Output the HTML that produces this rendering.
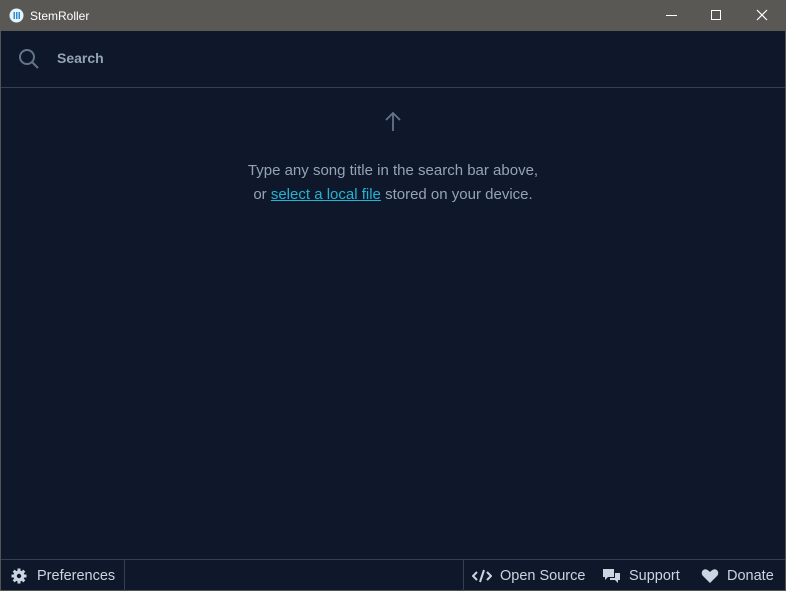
<!DOCTYPE html>
<html><head><style>
*{margin:0;padding:0;box-sizing:border-box}
body{width:786px;height:591px;overflow:hidden;background:#0f172a;font-family:"Liberation Sans",sans-serif;position:relative}
.tb{position:absolute;left:0;top:0;width:786px;height:31px;background:#595854;color:#fff;font-size:12px}
.frame{position:absolute;left:0;top:31px;width:786px;height:560px;border-left:1px solid #55554f;border-right:1px solid #55554f;border-bottom:1px solid #55554f}
.hline{position:absolute;left:1px;right:1px;height:1px;background:#334155}
.txt{position:absolute;left:0;width:786px;text-align:center;color:#94a3b8;font-size:15px}
.ft{position:absolute;top:560px;height:31px;color:#cbd5e1;font-size:14.5px;display:flex;align-items:center}
</style></head><body>
<div class="tb">
<svg style="position:absolute;left:9px;top:8px" width="15" height="15"><circle cx="7.5" cy="7.5" r="7" fill="#e8f4fb"/><rect x="4.5" y="4" width="1.5" height="7" fill="#2a8fd0"/><rect x="7" y="4" width="1.5" height="7" fill="#2a8fd0"/><rect x="9.5" y="4" width="1.5" height="7" fill="#2a8fd0"/></svg>
<span style="position:absolute;left:30px;top:9px">StemRoller</span>
<div style="position:absolute;left:666px;top:15px;width:11px;height:1px;background:#fff"></div>
<div style="position:absolute;left:711px;top:10px;width:10px;height:10px;border:1px solid #fff"></div>
<svg style="position:absolute;left:756px;top:9px" width="12" height="12"><path d="M1 1L11 11M11 1L1 11" stroke="#fff" stroke-width="1.2"/></svg>
</div>
<div class="frame"></div>
<svg style="position:absolute;left:18px;top:48px" width="22" height="22"><circle cx="9" cy="9" r="7" fill="none" stroke="#64748b" stroke-width="2"/><path d="M14 14L20 20" stroke="#64748b" stroke-width="2"/></svg>
<div style="position:absolute;left:57px;top:50px;color:#94a3b8;font-weight:bold;font-size:14px">Search</div>
<div class="hline" style="top:87px"></div>
<svg style="position:absolute;left:384px;top:111px" width="18" height="22"><path d="M9 20V2M2 9L9 2L16 9" fill="none" stroke="#64748b" stroke-width="1.8"/></svg>
<div class="txt" style="top:162px">Type any song title in the search bar above,</div>
<div class="txt" style="top:186px">or <span style="color:#22b5d3;text-decoration:underline">select a local file</span> stored on your device.</div>
<div class="hline" style="top:559px"></div>
<div style="position:absolute;left:124px;top:560px;width:1px;height:31px;background:#334155"></div>
<div style="position:absolute;left:463px;top:560px;width:1px;height:31px;background:#334155"></div>
<div class="ft" style="left:11px"><svg width="16" height="16" viewBox="0 0 16 16"><g fill="#cbd5e1"><circle cx="8" cy="8" r="5.5"/><rect x="6.5" y="0.5" width="3" height="15"/><rect x="0.5" y="6.5" width="15" height="3"/><rect x="6.5" y="0.5" width="3" height="15" transform="rotate(45 8 8)"/><rect x="6.5" y="0.5" width="3" height="15" transform="rotate(-45 8 8)"/></g><circle cx="8" cy="8" r="2.2" fill="#0f172a"/></svg><span style="margin-left:10px">Preferences</span></div>
<div class="ft" style="left:472px"><svg width="20" height="14"><path d="M5 3L1 7L5 11M15 3L19 7L15 11M12 1L8 13" fill="none" stroke="#cbd5e1" stroke-width="2"/></svg><span style="margin-left:8px">Open Source</span></div>
<div class="ft" style="left:602px"><svg width="20" height="16"><path d="M1 1H12V9H6L3 12V9H1Z" fill="#cbd5e1"/><path d="M13 5H18V12H16V15L13 12H8V10H13Z" fill="#cbd5e1"/></svg><span style="margin-left:7px">Support</span></div>
<div class="ft" style="left:701px"><svg width="18" height="16"><path d="M9 15L2 8C-1 5 2 0 5.5 1.5C7 2 8 3 9 4C10 3 11 2 12.5 1.5C16 0 19 5 16 8Z" fill="#cbd5e1"/></svg><span style="margin-left:8px">Donate</span></div>
</body></html>
